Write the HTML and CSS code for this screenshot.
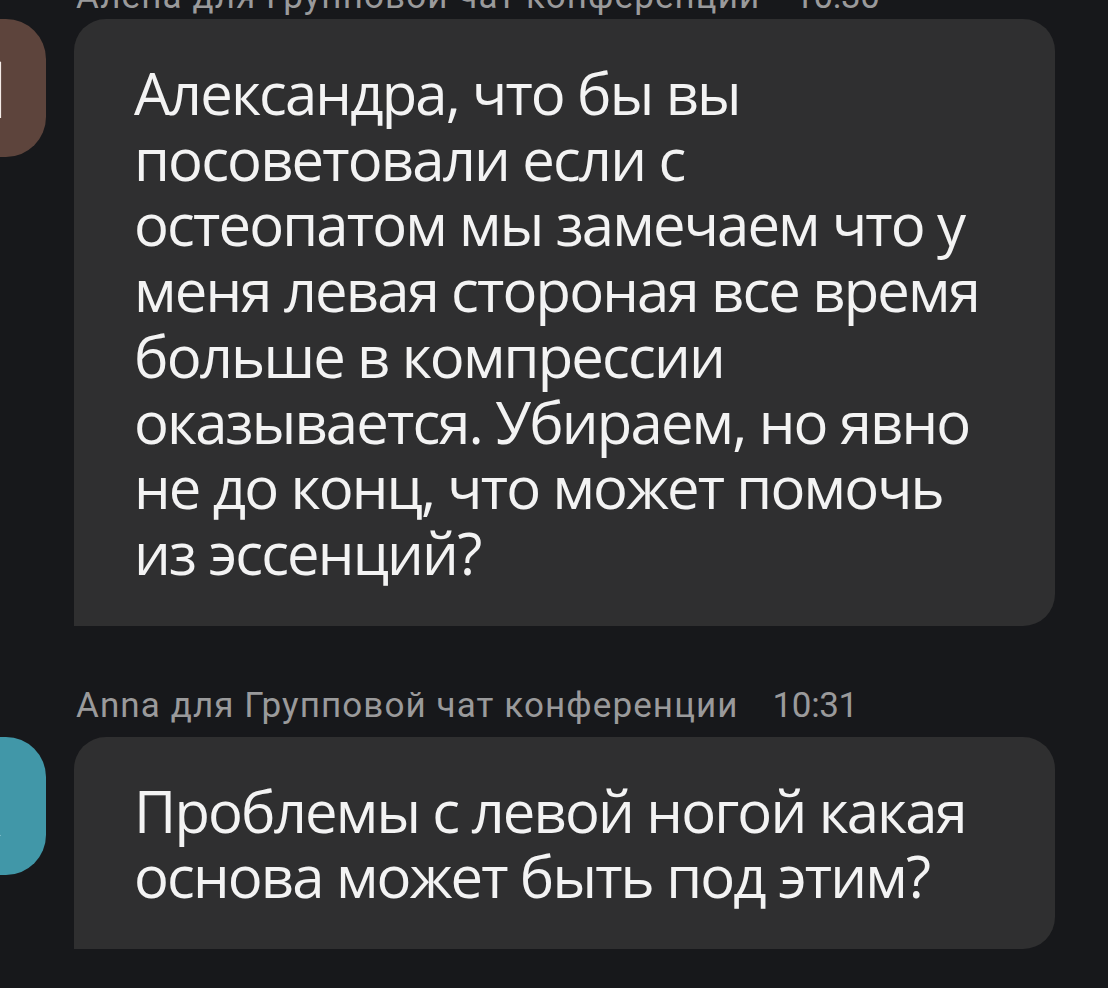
FILE: index.html
```html
<!DOCTYPE html>
<html lang="ru">
<head>
<meta charset="utf-8">
<title>Групповой чат конференции</title>
<link rel="stylesheet" href="styles.css">
</head>
<body>
<div class="chat">
  <div class="msg msg-top">
    <div class="meta"><span class="author">Алена для Групповой чат конференции</span><span class="time">10:30</span></div>
    <div class="row">
      <div class="avatar avatar-brown"><span class="initial">Н</span></div>
      <div class="bubble">Александра, что бы вы<br>посоветовали если с<br>остеопатом мы замечаем что у<br>меня левая стороная все время<br>больше в компрессии<br>оказывается. Убираем, но явно<br>не до конц, что может помочь<br>из эссенций?</div>
    </div>
  </div>
  <div class="msg">
    <div class="meta"><span class="author">Anna для Групповой чат конференции</span><span class="time">10:31</span></div>
    <div class="row">
      <div class="avatar avatar-teal"><span class="initial">А</span></div>
      <div class="bubble">Проблемы с левой ногой какая<br>основа может быть под этим?</div>
    </div>
  </div>
</div>
</body>
</html>
```

FILE: styles.css
```css
html, body {
  margin: 0;
  padding: 0;
  background: #17181b;
  overflow: hidden;
}

.chat {
  display: flex;
  flex-direction: column;
  gap: 60px;
  margin-top: -23px;
  padding-right: 53px;
}

.msg {
  display: flex;
  flex-direction: column;
  gap: 11px;
}

.msg-top {
  gap: 2px;
}

.meta {
  display: flex;
  gap: 34px;
  padding-left: 76px;
  height: 40px;
  font-family: Roboto, "Liberation Sans", sans-serif;
  font-size: 35px;
  line-height: 40px;
  color: #9a9a9b;
  white-space: nowrap;
}

.author {
  letter-spacing: 1.1px;
}

.time {
  letter-spacing: -0.4px;
}

.row {
  display: flex;
  align-items: flex-start;
  gap: 28px;
}

.avatar {
  flex-shrink: 0;
  width: 140px;
  height: 138px;
  margin-left: -94px;
  border-radius: 40px;
  display: flex;
  align-items: center;
  justify-content: center;
  overflow: hidden;
  font-family: "Open Sans", "Noto Sans", sans-serif;
  font-size: 78px;
  line-height: 1;
  color: #f4ece8;
}

.avatar-brown {
  background: #5d443c;
}

.avatar-teal {
  background: #4197a8;
  color: #d6eef2;
}

.avatar-brown .initial {
  margin-left: 8px;
}

.bubble {
  flex: 1;
  min-width: 0;
  background: #2f2f30;
  border-radius: 32px 32px 32px 0;
  padding: 41px 40px 40px 60px;
  font-family: "Open Sans", "Noto Sans", sans-serif;
  font-size: 58px;
  line-height: 65.7px;
  letter-spacing: -1.85px;
  color: #f3f3f3;
  white-space: nowrap;
}
```
